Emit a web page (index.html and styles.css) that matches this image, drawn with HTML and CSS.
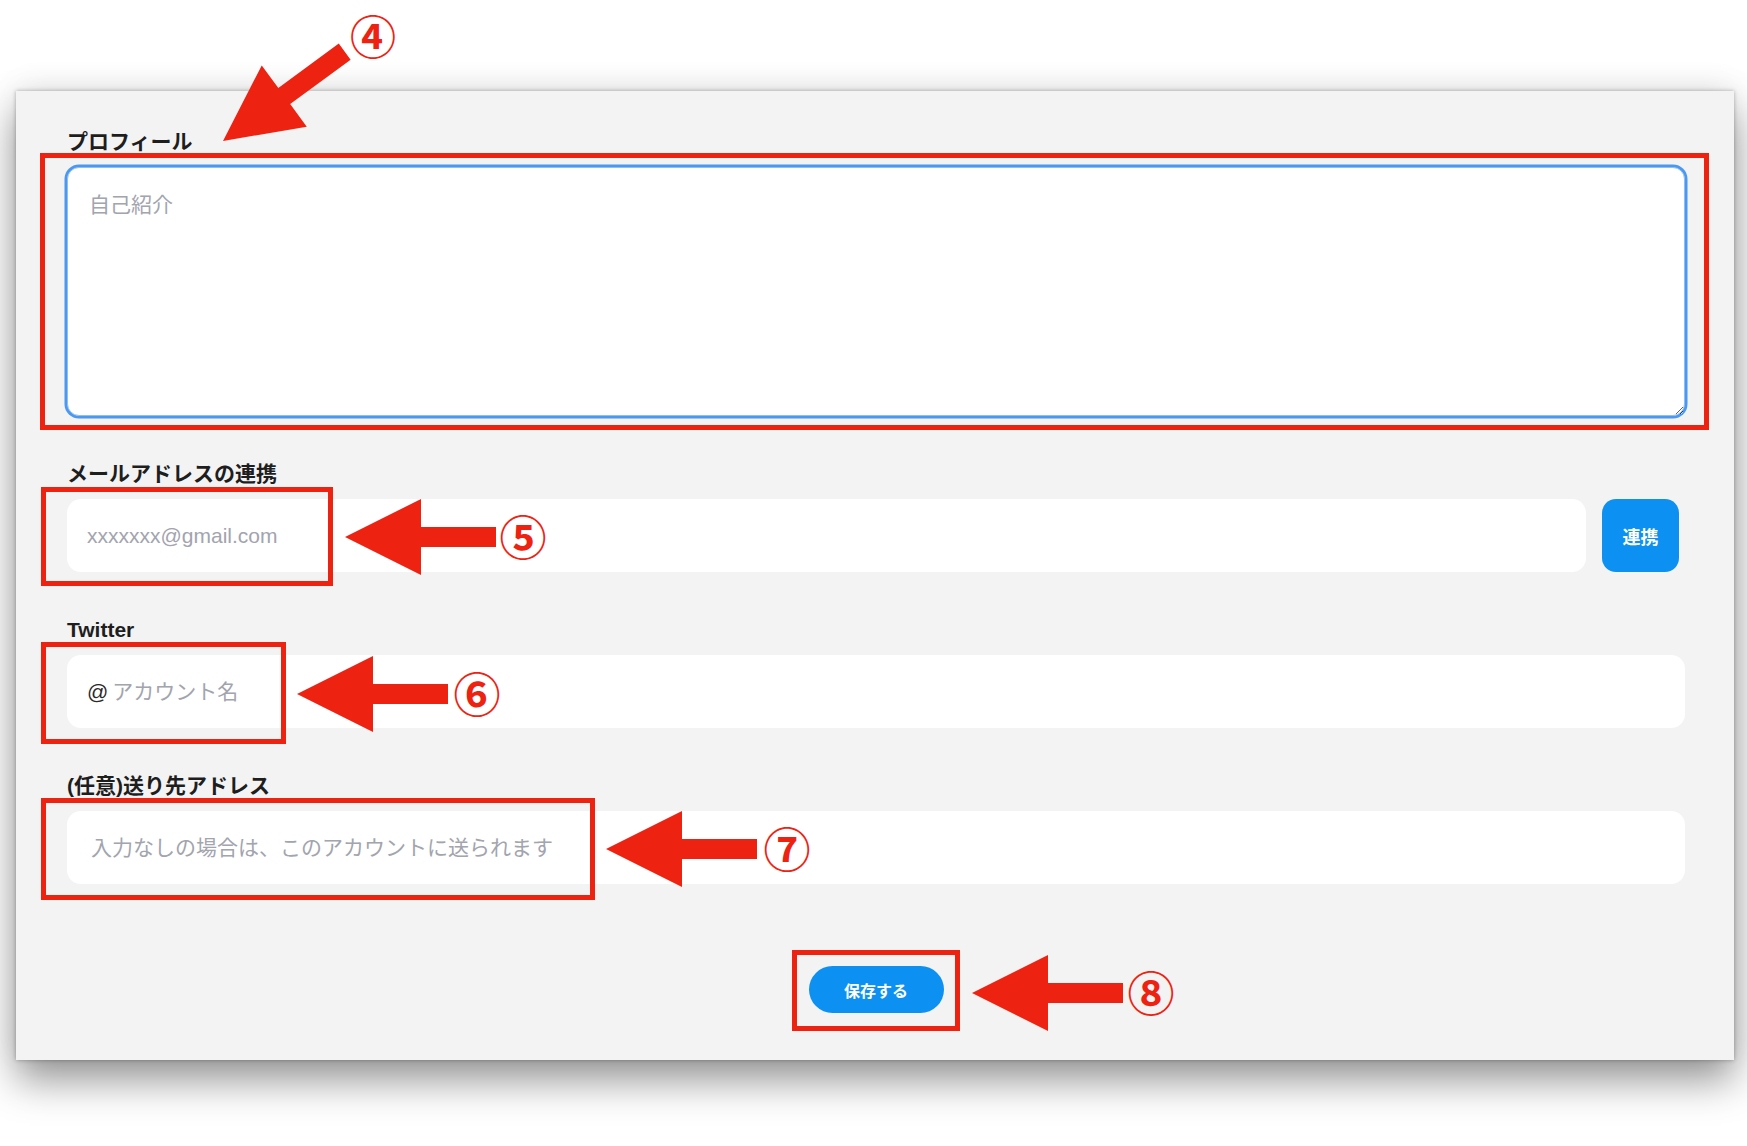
FILE: index.html
```html
<!DOCTYPE html>
<html lang="ja">
<head>
    <meta charset="UTF-8">
    <meta name="viewport" content="width=device-width, initial-scale=1.0">
    <title>プロフィール設定</title>
    <link rel="stylesheet" href="styles.css">
</head>
<body>

<div class="page">
    <div class="panel">
        <form class="profile-form">
            <div class="field">
                <label for="bio">プロフィール</label>
                <textarea id="bio" class="textarea" placeholder="自己紹介"></textarea>
            </div>

            <div class="field">
                <label for="email">メールアドレスの連携</label>
                <div class="row">
                    <input type="text" id="email" class="input" placeholder="xxxxxxx@gmail.com">
                    <button type="button" class="link-button">連携</button>
                </div>
            </div>

            <div class="field">
                <label for="twitter">Twitter</label>
                <div class="input prefixed">
                    <span class="prefix">@</span>
                    <input type="text" id="twitter" placeholder="アカウント名">
                </div>
            </div>

            <div class="field">
                <label for="address">(任意)送り先アドレス</label>
                <input type="text" id="address" class="input input-address" placeholder="入力なしの場合は、このアカウントに送られます">
            </div>

            <div class="actions">
                <button type="submit" class="save-button">保存する</button>
            </div>
        </form>
    </div>

    <!-- annotation layer -->
    <div class="notes">
        <div class="mark mark-bio"></div>
        <div class="mark mark-email"></div>
        <div class="mark mark-twitter"></div>
        <div class="mark mark-address"></div>
        <div class="mark mark-save"></div>

        <svg class="arrows" width="1747" height="1146" viewBox="0 0 1747 1146">
            <defs>
                <polygon id="arrow" points="0,0 76,-38 76,-10 151,-10 151,10 76,10 76,38"/>
            </defs>
            <use href="#arrow" transform="translate(223 141) rotate(-36.3)"/>
            <use href="#arrow" transform="translate(345 537)"/>
            <use href="#arrow" transform="translate(297 694)"/>
            <use href="#arrow" transform="translate(606 849)"/>
            <use href="#arrow" transform="translate(972 993)"/>
        </svg>

        <span class="num num-4">④</span>
        <span class="num num-5">⑤</span>
        <span class="num num-6">⑥</span>
        <span class="num num-7">⑦</span>
        <span class="num num-8">⑧</span>
    </div>
</div>

</body>
</html>
```

FILE: styles.css
```css
body {
    font-family: 'Liberation Sans', 'Noto Sans CJK JP', sans-serif;
    background-color: #ffffff;
    color: #222222;
    margin: 0;
    padding: 0;
}
.page {
    position: relative;
    box-sizing: border-box;
    width: 1747px;
    height: 1146px;
    padding: 91px 13px 0 16px;
}
.panel {
    box-sizing: border-box;
    width: 1718px;
    padding: 40px 49px 47px 51px;
    background-color: #f3f3f3;
    box-shadow: 0 0 4px rgba(0, 0, 0, 0.3), 0 -6px 30px rgba(0, 0, 0, 0.06), 0 20px 38px rgba(0, 0, 0, 0.42);
}
.field + .field {
    margin-top: 47px;
}
label {
    display: block;
    font-size: 21px;
    line-height: 22px;
    font-weight: 700;
    color: #1e1e1e;
    margin-top: -2px;
    padding-top: 2px;
    margin-bottom: 14px;
}
.textarea {
    display: block;
    box-sizing: border-box;
    width: 100%;
    height: 249px;
    margin-top: 2px;
    padding: 23px 21px;
    background-color: #ffffff;
    border: 1px solid #8fbdf4;
    border-radius: 12px;
    box-shadow: 0 0 0 2.5px #4a98f0;
    font: inherit;
    font-size: 21px;
    line-height: 28px;
    color: #333333;
    outline: none;
}
.input {
    display: block;
    box-sizing: border-box;
    width: 100%;
    height: 73px;
    padding: 0 20px;
    background-color: #ffffff;
    border: none;
    border-radius: 14px;
    font: inherit;
    font-size: 21px;
    color: #333333;
    outline: none;
}
::placeholder {
    color: #a2a4ae;
}
.input-address {
    padding-left: 24px;
}
.row {
    display: flex;
    gap: 16px;
    padding-right: 6px;
}
.row .input {
    flex: 1;
    min-width: 0;
}
.link-button {
    width: 77px;
    height: 73px;
    border: none;
    border-radius: 14px;
    background-color: #0c91f2;
    color: #ffffff;
    font: inherit;
    font-size: 18px;
    font-weight: 700;
    cursor: pointer;
}
.prefixed {
    display: flex;
    align-items: center;
    padding-left: 20px;
}
.prefix {
    font-size: 21px;
    color: #2a2a2a;
    margin-right: 4px;
}
.prefixed input {
    flex: 1;
    min-width: 0;
    height: 100%;
    padding: 0;
    border: none;
    background: transparent;
    font: inherit;
    font-size: 21px;
    color: #333333;
    outline: none;
}
.actions {
    display: flex;
    justify-content: center;
    margin-top: 82px;
}
.save-button {
    width: 135px;
    height: 47px;
    border: none;
    border-radius: 24px;
    background-color: #0c91f2;
    color: #ffffff;
    font: inherit;
    font-size: 16px;
    font-weight: 700;
    cursor: pointer;
}

/* annotations */
.notes {
    position: absolute;
    top: 0;
    left: 0;
    width: 1747px;
    height: 1146px;
    pointer-events: none;
}
.mark {
    position: absolute;
    box-sizing: border-box;
    border: 5px solid #ee2211;
}
.mark-bio {
    left: 40px;
    top: 153px;
    width: 1669px;
    height: 277px;
}
.mark-email {
    left: 41px;
    top: 487px;
    width: 292px;
    height: 99px;
}
.mark-twitter {
    left: 41px;
    top: 642px;
    width: 245px;
    height: 102px;
}
.mark-address {
    left: 41px;
    top: 798px;
    width: 554px;
    height: 102px;
}
.mark-save {
    left: 792px;
    top: 950px;
    width: 168px;
    height: 81px;
}
.arrows {
    position: absolute;
    top: 0;
    left: 0;
    fill: #ee2211;
}
.num {
    position: absolute;
    width: 50px;
    font-family: 'Noto Sans CJK JP', sans-serif;
    font-size: 47px;
    line-height: 47px;
    font-weight: 700;
    text-align: center;
    color: #ee2211;
}
.num-4 { left: 348px; top: 11px; font-size: 46px; line-height: 46px; }
.num-5 { left: 498px; top: 511px; }
.num-6 { left: 452px; top: 668px; }
.num-7 { left: 762px; top: 823px; }
.num-8 { left: 1126px; top: 967px; }
```
